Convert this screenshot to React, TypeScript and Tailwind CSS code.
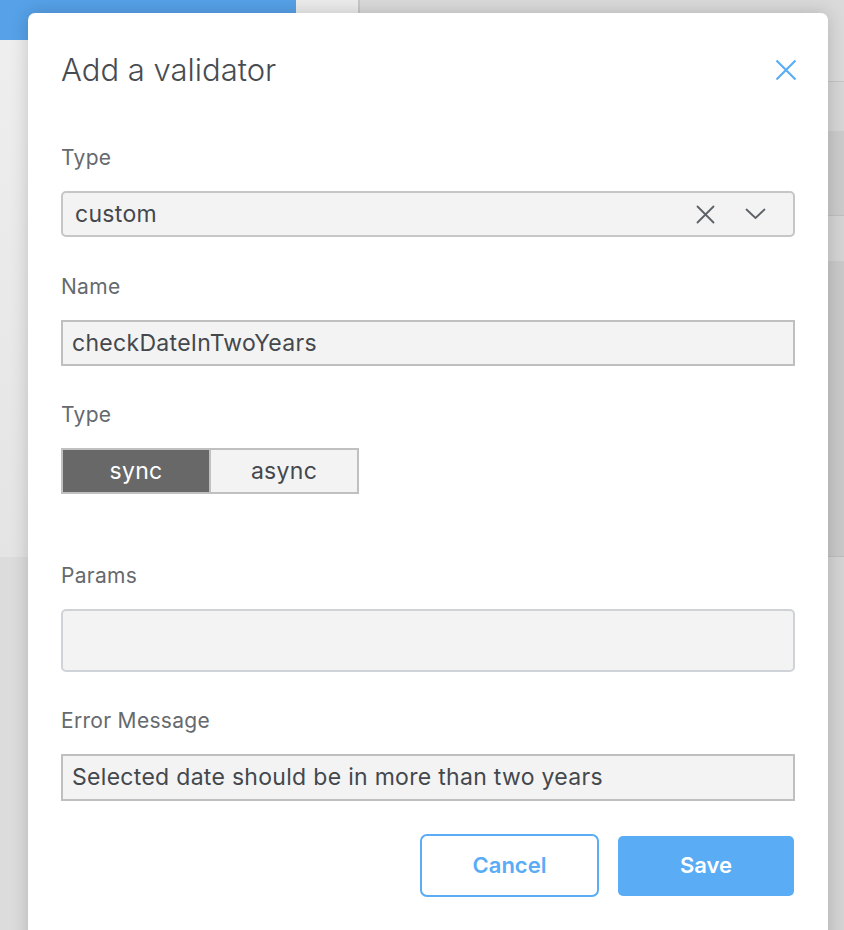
import React from 'react'

const font = { fontFamily: 'Inter, "Noto Sans", sans-serif' }

/* ─── Select icons ─────────────────────────────────────────── */
function ClearIcon({ className }: { className?: string }) {
  return (
    <svg width="19" height="19" viewBox="0 0 19 19" className={className} aria-hidden>
      <path d="M1.5 1.5 17.5 17.5M17.5 1.5 1.5 17.5" stroke="currentColor" strokeWidth="1.8" fill="none" strokeLinecap="round" />
    </svg>
  )
}

function ChevronIcon({ className }: { className?: string }) {
  return (
    <svg width="21" height="12" viewBox="0 0 21 12" className={className} aria-hidden>
      <path d="M1.5 1.5 10.5 10 19.5 1.5" stroke="currentColor" strokeWidth="1.8" fill="none" strokeLinecap="round" strokeLinejoin="round" />
    </svg>
  )
}

function Label({ children }: { children: React.ReactNode }) {
  return <div className="text-[21px] leading-[24px] text-[#666a6e] tracking-[0.3px] mb-[21px]">{children}</div>
}

/* ─── Dimmed app behind the dialog ─────────────────────────── */
function Backdrop() {
  return (
    <div className="absolute inset-0 flex flex-col">
      <div className="flex h-[40px] shrink-0">
        <div className="w-[296px] bg-[#56a1e8]" />
        <div className="w-[64px] bg-[#ececec] border-r-2 border-[#c8c8c8]" />
        <div className="flex-1 bg-[#dadada]" />
      </div>
      <div className="flex flex-1">
        <div className="w-[300px] flex flex-col">
          <div className="h-[517px] bg-gradient-to-b from-[#eeeeee] to-[#e4e4e4]" />
          <div className="flex-1 bg-[#dcdcdc]" />
        </div>
        <div className="flex-1 flex flex-col bg-[#d4d4d4]">
          <div className="h-[42px] border-b border-[#c4c4c4] bg-[#dadada]" />
          <div className="h-[49px] bg-[#d6d6d6]" />
          <div className="h-[85px] bg-[#cbcbcb] border-b border-[#bfbfbf]" />
          <div className="h-[45px] bg-[#d4d4d4]" />
          <div className="h-[296px] bg-[#c9c9c9] border-b border-[#bdbdbd]" />
          <div className="flex-1 bg-[#d4d4d4]" />
        </div>
      </div>
    </div>
  )
}

export default function App() {
  return (
    <div className="relative w-[844px] h-[930px] overflow-hidden" style={font}>
      <Backdrop />

      {/* Dialog */}
      <div className="absolute left-[28px] top-[13px] w-[800px] h-[940px] bg-white rounded-[7px] shadow-[0_0_18px_rgba(0,0,0,0.18)] px-[33px] pt-[39px]">
        <div className="flex items-center justify-between h-[36px] mb-[58px]">
          <h2 className="text-[31px] leading-[36px] font-light text-[#474c52]">Add a validator</h2>
          <svg width="22" height="22" viewBox="0 0 22 22" className="text-[#5aacf5] mr-[-2px]" aria-hidden>
            <path d="M1.5 1.5 20.5 20.5M20.5 1.5 1.5 20.5" stroke="currentColor" strokeWidth="2.2" fill="none" />
          </svg>
        </div>

        <Label>Type</Label>
        <div className="flex items-center h-[46px] rounded-[5px] border-2 border-[#c6c6c6] bg-[#f3f3f3] pl-[12px] pr-[27px] mb-[38px]">
          <span className="flex-1 text-[23px] tracking-[0.3px] text-[#44484d]">custom</span>
          <ClearIcon className="text-[#5d6166]" />
          <ChevronIcon className="text-[#5d6166] ml-[30px]" />
        </div>

        <Label>Name</Label>
        <div className="flex items-center h-[46px] border-2 border-[#bfbfbf] bg-[#f3f3f3] pl-[9px] mb-[37px]">
          <span className="text-[23px] tracking-[0.3px] text-[#44484d]">checkDateInTwoYears</span>
        </div>

        <Label>Type</Label>
        <div className="flex w-[298px] h-[46px] border-2 border-[#c0c0c0] bg-[#c0c0c0] gap-[2px] mb-[70px]">
          <div className="flex-1 flex items-center justify-center bg-[#686868] text-white text-[23px] tracking-[0.3px]">sync</div>
          <div className="flex-1 flex items-center justify-center bg-[#f3f3f3] text-[#44484d] text-[23px] tracking-[0.3px]">async</div>
        </div>

        <Label>Params</Label>
        <div className="h-[63px] rounded-[5px] border-2 border-[#cfd3d7] bg-[#f3f3f3] mb-[37px]" />

        <Label>Error Message</Label>
        <div className="flex items-center h-[47px] border-2 border-[#bfbfbf] bg-[#f3f3f3] pl-[9px] mb-[33px]">
          <span className="text-[23px] tracking-[0.3px] text-[#44484d]">Selected date should be in more than two years</span>
        </div>

        <div className="flex justify-end items-center gap-[19px]">
          <button className="w-[179px] h-[63px] rounded-[7px] border-2 border-[#5aacf5] bg-white text-[#5aacf5] text-[22px] font-semibold">
            Cancel
          </button>
          <button className="w-[176px] h-[60px] rounded-[5px] bg-[#5aacf5] text-white text-[22px] font-semibold mr-[1px]">
            Save
          </button>
        </div>
      </div>
    </div>
  )
}
